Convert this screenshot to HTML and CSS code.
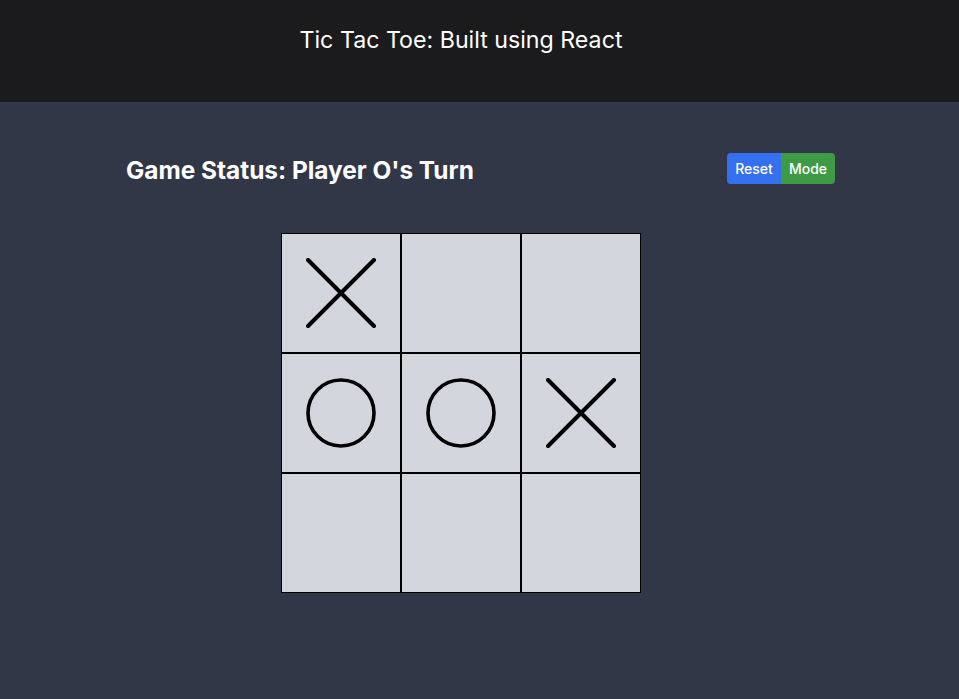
FILE: index.html
```html
<!DOCTYPE html>
<html>
<head>
<meta charset="utf-8">
<link rel="stylesheet" href="styles.css">
</head>
<body>
<header class="header">
  <h1 class="title">Tic Tac Toe: Built using React</h1>
</header>
<main class="main">
  <div class="status-row">
    <h2 class="status">Game Status: Player O's Turn</h2>
    <div class="btn-group">
      <button class="btn btn-reset">Reset</button>
      <button class="btn btn-mode">Mode</button>
    </div>
  </div>
  <div class="board-wrap">
    <div class="board">
      <div class="cell"><svg class="mark" viewBox="0 0 68 68"><path d="M2 2 L66 66 M66 2 L2 66" /></svg></div>
      <div class="cell"></div>
      <div class="cell"></div>
      <div class="cell"><svg class="mark" viewBox="0 0 70 70"><circle cx="35" cy="35" r="33" /></svg></div>
      <div class="cell"><svg class="mark" viewBox="0 0 70 70"><circle cx="35" cy="35" r="33" /></svg></div>
      <div class="cell"><svg class="mark" viewBox="0 0 68 68"><path d="M2 2 L66 66 M66 2 L2 66" /></svg></div>
      <div class="cell"></div>
      <div class="cell"></div>
      <div class="cell"></div>
    </div>
  </div>
</main>
</body>
</html>
```
FILE: styles.css
```css
html, body {
  margin: 0;
  padding: 0;
  height: 100%;
}
body {
  background: #323748;
  font-family: Inter, "Noto Sans", sans-serif;
  color: #ffffff;
}
.header {
  background: #1b1b1d;
  height: 102px;
  display: flex;
  justify-content: center;
  box-sizing: border-box;
  padding-right: 37px;
}
.title {
  margin: 0;
  margin-top: 25px;
  font-size: 23.2px;
  font-weight: 400;
  line-height: 30px;
}
.main {
  padding-top: 51px;
}
.status-row {
  width: 709px;
  margin: 0 auto;
  padding-left: 2px;
  display: flex;
  justify-content: space-between;
  align-items: flex-start;
}
.status {
  margin: 0;
  margin-top: 1px;
  font-size: 24.4px;
  font-weight: 700;
  line-height: 32px;
}
.btn-group {
  display: flex;
  border-radius: 4px;
  overflow: hidden;
}
.btn {
  border: none;
  margin: 0;
  width: 54px;
  height: 31px;
  color: #ffffff;
  font-family: Inter, "Noto Sans", sans-serif;
  font-size: 14px;
  font-weight: 500;
  padding: 0;
}
.btn-reset {
  background: #3470f0;
}
.btn-mode {
  background: #3f9a45;
}
.board-wrap {
  display: flex;
  justify-content: center;
  padding-right: 37px;
  margin-top: 47px;
}
.board {
  display: grid;
  grid-template-columns: repeat(3, 120px);
  grid-template-rows: repeat(3, 120px);
}
.cell {
  box-sizing: border-box;
  border: 1px solid #000000;
  background: #d4d6de;
  display: flex;
  align-items: center;
  justify-content: center;
}
.mark {
  width: 70px;
  height: 70px;
  fill: none;
  stroke: #000000;
  stroke-width: 4;
  stroke-linecap: round;
}
.mark circle {
  stroke-width: 3.6;
}
```
